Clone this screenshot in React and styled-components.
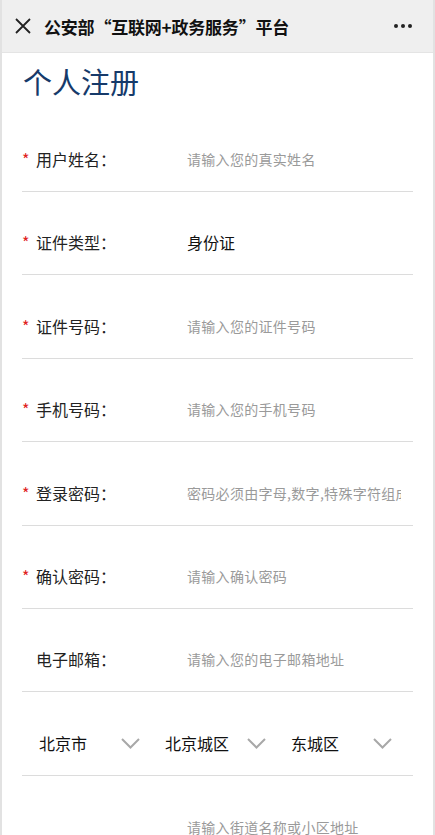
import React from 'react';
import styled, { createGlobalStyle } from 'styled-components';

const GlobalStyle = createGlobalStyle`
  html, body {
    margin: 0;
    padding: 0;
    background: #fff;
    font-family: "Noto Sans CJK SC", "Noto Sans", sans-serif;
  }
  * { box-sizing: border-box; }
`;

const Page = styled.div`
  width: 435px;
  height: 835px;
  overflow: hidden;
  border-left: 2px solid #e2e2e2;
  border-right: 2px solid #e2e2e2;
  background: #fff;
`;

const TopBar = styled.div`
  height: 53px;
  background: #efefef;
  border-bottom: 1px solid #e4e4e4;
  display: flex;
  align-items: center;
  padding: 0 20px 0 12px;
`;

const BarTitle = styled.div`
  flex: 1;
  margin-left: 12px;
  font-size: 17px;
  font-weight: 700;
  color: #111;
  letter-spacing: -0.2px;
`;

const Heading = styled.h1`
  margin: 8px 0 0 21px;
  font-size: 29px;
  font-weight: 400;
  color: #163a6a;
  line-height: 40px;
`;

const Form = styled.div`
  padding: 0 20px 0 20px;
`;

const Row = styled.div`
  height: ${p => p.h || 83}px;
  display: flex;
  align-items: flex-end;
  padding-bottom: 21px;
  border-bottom: ${p => (p.last ? 'none' : '1px solid #dcdcdc')};
`;

const Label = styled.div`
  width: 165px;
  display: flex;
  align-items: center;
  font-size: 16px;
  color: #222;
  line-height: 22px;
`;

const Star = styled.span`
  width: 14px;
  color: #e02020;
  font-size: 16px;
  visibility: ${p => (p.show ? 'visible' : 'hidden')};
`;

const Field = styled.input`
  width: 214px;
  border: none;
  outline: none;
  padding: 0;
  background: transparent;
  font-family: "Noto Sans CJK SC", sans-serif;
  font-size: 14px;
  letter-spacing: 0.3px;
  line-height: 22px;
  color: #222;
  &::placeholder { color: #9a9a9a; }
`;

const Value = styled.div`
  font-size: 16px;
  color: #111;
  line-height: 22px;
`;

const Selects = styled.div`
  display: grid;
  grid-template-columns: repeat(3, 126px);
`;

const Select = styled.div`
  display: flex;
  align-items: center;
  justify-content: space-between;
  padding: 0 8px 0 17px;
  font-size: 16px;
  color: #111;
  line-height: 22px;
`;

const Chevron = () => (
  <svg width="19" height="11" viewBox="0 0 19 11">
    <path d="M1 1 L9.5 9.5 L18 1" fill="none" stroke="#a8a8a8" strokeWidth="2" />
  </svg>
);

const fields = [
  { label: '用户姓名：', req: true, ph: '请输入您的真实姓名', h: 91 },
  { label: '证件类型：', req: true, value: '身份证', h: 83 },
  { label: '证件号码：', req: true, ph: '请输入您的证件号码', h: 84 },
  { label: '手机号码：', req: true, ph: '请输入您的手机号码', h: 83 },
  { label: '登录密码：', req: true, ph: '密码必须由字母,数字,特殊字符组成', type: 'password', h: 84 },
  { label: '确认密码：', req: true, ph: '请输入确认密码', type: 'password', h: 83 },
  { label: '电子邮箱：', req: false, ph: '请输入您的电子邮箱地址', h: 83 },
];

export default function App() {
  return (
    <Page>
      <GlobalStyle />
      <TopBar>
        <svg width="18" height="18" viewBox="0 0 18 18">
          <path d="M2 2 L16 16 M16 2 L2 16" stroke="#222" strokeWidth="1.8" />
        </svg>
        <BarTitle>公安部“互联网+政务服务”平台</BarTitle>
        <svg width="20" height="6" viewBox="0 0 20 6">
          <circle cx="3" cy="3" r="2" fill="#222" />
          <circle cx="10" cy="3" r="2" fill="#222" />
          <circle cx="17" cy="3" r="2" fill="#222" />
        </svg>
      </TopBar>
      <Heading>个人注册</Heading>
      <Form>
        {fields.map(f => (
          <Row key={f.label} h={f.h}>
            <Label>
              <Star show={f.req}>*</Star>
              {f.label}
            </Label>
            {f.value ? <Value>{f.value}</Value> : <Field type={f.type || 'text'} placeholder={f.ph} />}
          </Row>
        ))}
        <Row h={84}>
          <Selects>
            <Select>北京市<Chevron /></Select>
            <Select>北京城区<Chevron /></Select>
            <Select>东城区<Chevron /></Select>
          </Selects>
        </Row>
        <Row last>
          <Label />
          <Field placeholder="请输入街道名称或小区地址" />
        </Row>
      </Form>
    </Page>
  );
}
